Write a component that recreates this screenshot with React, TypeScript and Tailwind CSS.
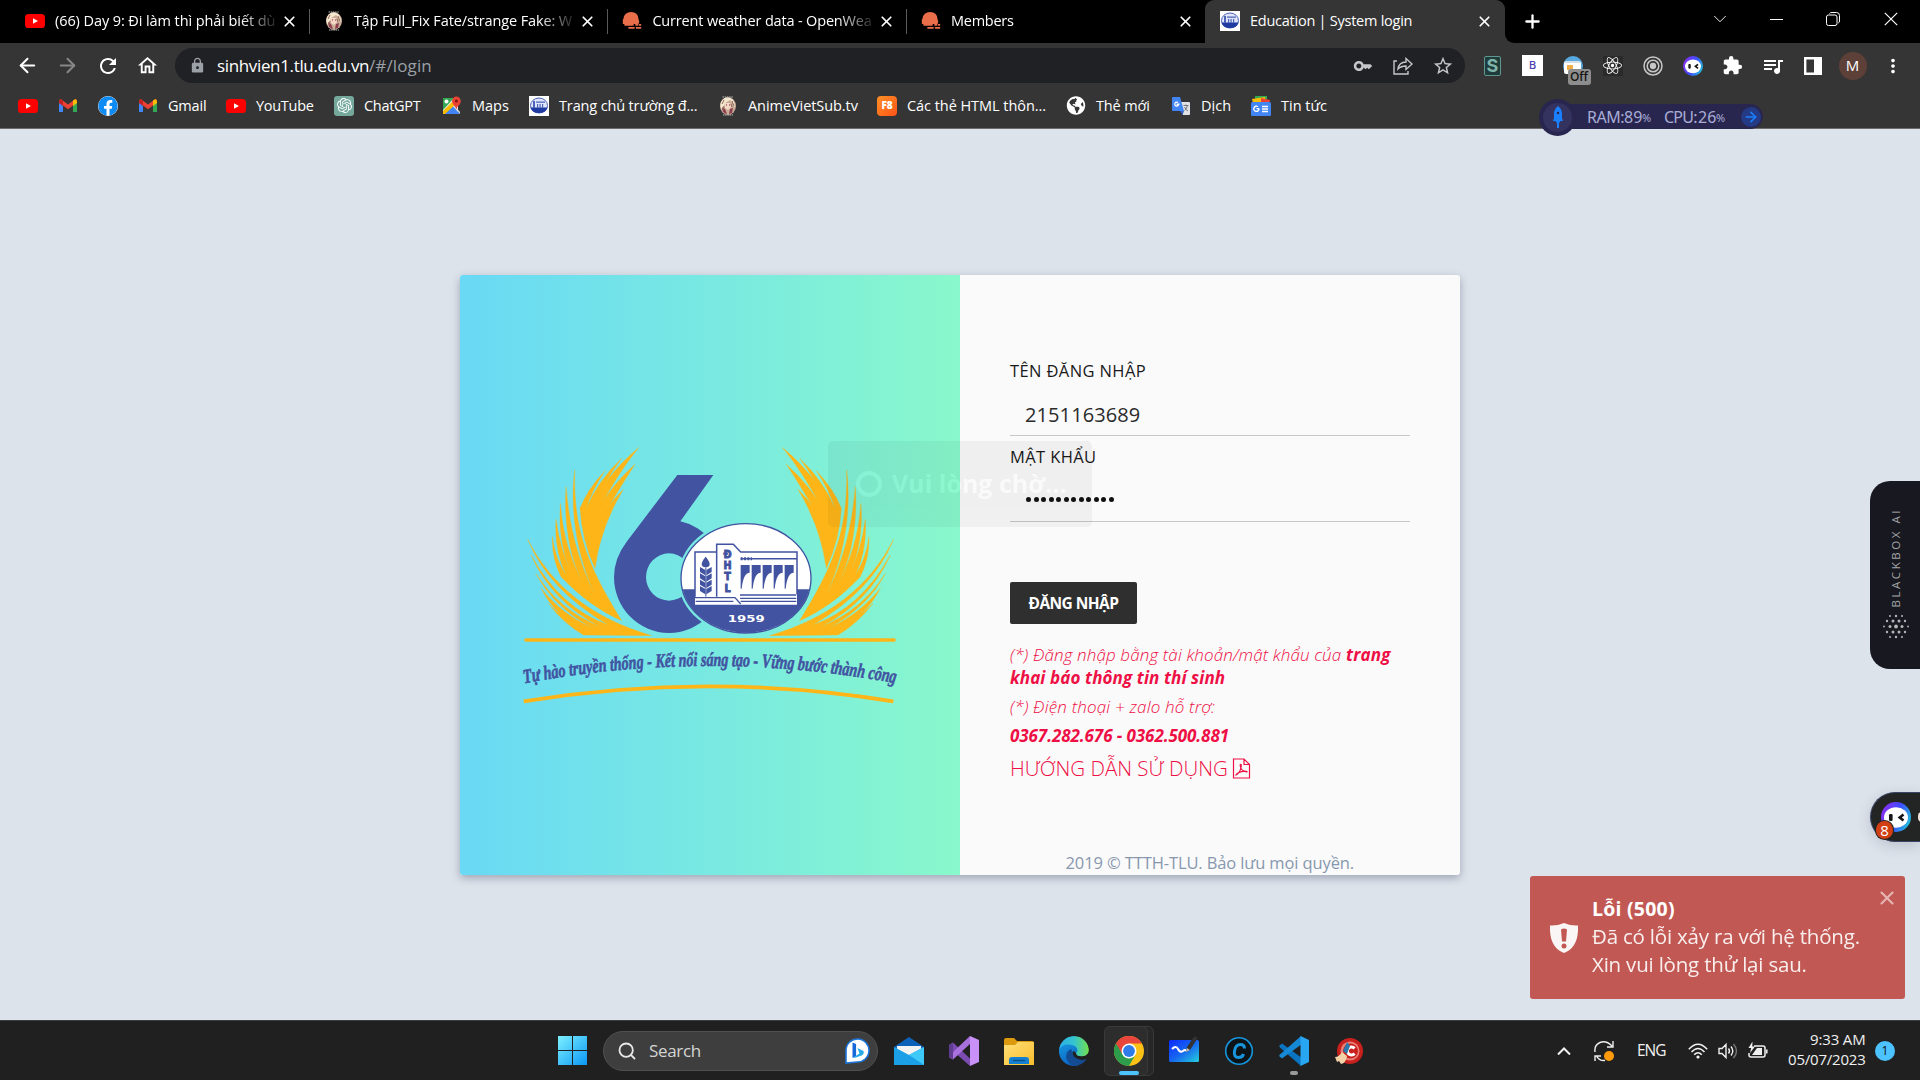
import React, { useLayoutEffect, useRef, useState } from "react";
import { ArrowLeft, ArrowRight, Search, X, Plus, ChevronDown } from "lucide-react";
import { FaFacebook, FaGlobeAmericas, FaReact } from "react-icons/fa";
import { MdKey, MdLock, MdRefresh, MdOutlineHome, MdExtension, MdStarBorder, MdMoreVert, MdQueueMusic } from "react-icons/md";
import { SiOpenai } from "react-icons/si";

/** Text set to an exact advance width by distributing letter spacing. */
function Fit({ w, className = "", children }: { w: number; className?: string; children: React.ReactNode }) {
  const ref = useRef<HTMLSpanElement>(null);
  const [spacing, setSpacing] = useState(0);
  useLayoutEffect(() => {
    const el = ref.current;
    if (!el) return;
    const count = (el.textContent || "").normalize("NFC").length;
    el.style.letterSpacing = "0px";
    setSpacing((w - el.offsetWidth) / count);
  }, [w]);
  return (
    <span className={`block shrink-0 whitespace-pre ${className}`} style={{ width: w }}>
      <span ref={ref} style={{ letterSpacing: `${spacing}px` }}>{children}</span>
    </span>
  );
}

/* ---------- small brand icons ---------- */
const YouTube = () => (
  <svg viewBox="0 0 20 20" className="h-5 w-5 shrink-0">
    <rect x="0" y="3" width="20" height="14" rx="3.6" fill="#f00" />
    <path d="M8 7.2v5.6l5-2.8z" fill="#fff" />
  </svg>
);
const Gmail = () => (
  <svg viewBox="0 0 20 20" className="h-5 w-5 shrink-0">
    <path d="M1 5v11h4V9z" fill="#4285f4" />
    <path d="M19 5v11h-4V9z" fill="#34a853" />
    <path d="M1 5.5Q1 3 3.4 3.4L10 8.4l6.6-5Q19 3 19 5.5L15 9.4l-5 3.8-5-3.8z" fill="#ea4335" />
    <path d="M15 4.6l1.6-1.2Q19 3 19 5.7V7l-4 3z" fill="#fbbc04" />
    <path d="M1 5.5V7l4 3V5L3.4 3.4Q1 3 1 5.5z" fill="#c5221f" />
  </svg>
);
const Maps = () => (
  <svg viewBox="0 0 20 20" className="h-5 w-5 shrink-0">
    <path d="M1 2h15v16H1z" fill="#e8eaed" />
    <path d="M1 2h11L1 14z" fill="#34a853" />
    <path d="M1 18L10 9l8 9z" fill="#4285f4" />
    <path d="M1 15L12 4l3 3L3 18H1z" fill="#fbbc04" />
    <path d="M11 10l2 0 5 6v2z" fill="#dadce0" />
    <path d="M14 13c0-3-4-4-4-8a4.4 4.4 0 018.800 0c0 4-4 5-4.200 8z" fill="#ea4335" />
    <circle cx="14.400" cy="5" r="1.500" fill="#811411" />
    <circle cx="4.500" cy="5.500" r="2" fill="#fff" />
  </svg>
);
const Tlu = () => (
  <svg viewBox="0 0 20 20" className="h-5 w-5 shrink-0">
    <rect width="20" height="20" fill="#fff" />
    <ellipse cx="10" cy="9.500" rx="8.500" ry="7.500" fill="#dfe6fb" stroke="#4d63b8" />
    <path d="M1.500 11.500h17Q17 17 10 17T1.500 11.500z" fill="#1f3aa0" />
    <path d="M4 5h2v7H4zM7 5.500h9v1.300H7zM8 8h1.200v4H8zM10.500 8h1.200v4h-1.200zM13 8h1.200v4H13z" fill="#4d63b8" />
  </svg>
);
const Anime = () => (
  <svg viewBox="0 0 20 20" className="h-5 w-5 shrink-0">
    <ellipse cx="10" cy="10" rx="8" ry="9" fill="#c9ac98" />
    <path d="M3 6Q6 0 12 2q5 2 5 9-2-1-2-4l-3-3-5 3-2 8Q1 11 3 6z" fill="#f4e7cf" />
    <path d="M7 7h5l1 4-3 3-3-2z" fill="#f7d8c6" />
    <path d="M4 11l3 2 2 5Q4 17 4 11zM12 13l3-1-1 5-3 1z" fill="#8c3c4c" />
    <path d="M4 8l2-4M14 5l2 5M6 10l-1 4M13 8l1 3" stroke="#8f6558" strokeWidth="1" />
    <path d="M4.500 1h11M5 19h10" stroke="#bbb" strokeWidth="1" strokeDasharray="1.500 .7" />
    <path d="M8 9h1M11 9h1" stroke="#6b2737" strokeWidth="1.200" />
  </svg>
);
const Weather = () => (
  <svg viewBox="0 0 20 20" className="h-5 w-5 shrink-0">
    <path d="M1 11Q0 9 1.500 7.500 2.500 1 9 1q7 0 7.500 7 1.500 3 0 5H2Q0 13 1 11z" fill="#eb6e4b" />
    <path d="M3 13.800h8M14 13.800h1.500M17.500 13.800h1M7 16.800h5M14.500 16.800h4" stroke="#eb6e4b" strokeWidth="1.700" strokeLinecap="round" />
  </svg>
);
const F8 = () => (
  <span className="flex h-5 w-5 shrink-0 items-center justify-center rounded-[4px] bg-gradient-to-br from-[#ff8f26] to-[#ff5117] font-['Open_Sans'] text-[10px] font-extrabold text-white">F8</span>
);
const Translate = () => (
  <svg viewBox="0 0 20 20" className="h-5 w-5 shrink-0">
    <path d="M8 6h10q1 0 1 1v11q0 1-1 1h-6z" fill="#dfe1e5" />
    <path d="M2 1h7l4 14H2q-1 0-1-1V2q0-1 1-1z" fill="#4285f4" />
    <path d="M9 15h4l-1.500 4z" fill="#3060c0" />
    <path d="M8.600 8H6.200v1.200h1.200A2 2 0 117 6.500" stroke="#fff" strokeWidth="1.200" fill="none" />
    <path d="M12.500 9.500h5M15 8.500v1M16.500 9.500q-.5 3-3 5M13.500 11q1.500 3 3.500 4" stroke="#777" strokeWidth="1" fill="none" />
  </svg>
);
const News = () => (
  <svg viewBox="0 0 20 20" className="h-5 w-5 shrink-0">
    <path d="M4 0h12v6H4z" fill="#34a853" />
    <path d="M1 3l13-2 1 6H2z" fill="#fbbc04" />
    <path d="M10 2l9 2-1 4h-8z" fill="#ea4335" />
    <rect x="0" y="6" width="20" height="14" rx="1.500" fill="#4285f4" />
    <path d="M8 12.600H5.500M8 12.600A2.600 2.600 0 117 10.700M11 10.500h6M11 13h6M11 15.500h6" stroke="#fff" strokeWidth="1.400" fill="none" />
  </svg>
);
const Face = ({ className = "h-5 w-5" }: { className?: string }) => (
  <svg viewBox="0 0 30 30" className={`${className} shrink-0`}>
    <defs>
      <linearGradient id="face" x1="0" y1=".3" x2="1" y2=".7">
        <stop offset="0" stopColor="#8a2ff0" />
        <stop offset=".5" stopColor="#3f4bff" />
        <stop offset="1" stopColor="#1fc3d8" />
      </linearGradient>
    </defs>
    <circle cx="15" cy="15" r="15" fill="url(#face)" />
    <ellipse cx="15" cy="15.500" rx="12" ry="10.300" fill="#fff" />
    <rect x="8" y="12" width="3.600" height="7" rx="1.200" fill="#161616" />
    <path d="M22.500 12.500l-3.800 3 3.800 3" stroke="#161616" strokeWidth="2.600" fill="none" />
  </svg>
);

/* ---------- browser chrome ---------- */
const ui = "font-['Open_Sans',sans-serif]";

function Tab({ icon, title, w, last = false }: { icon: React.ReactNode; title: string; w: number; last?: boolean }) {
  return (
    <div className={`flex h-[43px] shrink-0 items-center pb-[1px] pl-[14px] ${last ? "w-[298px]" : "w-[298.700px]"}`}>
      {icon}
      <div className="ml-[10px] w-[221px] [mask-image:linear-gradient(to_right,black_84%,transparent_102%)]">
        <Fit w={w} className="text-[14.500px] leading-5 text-white">{title}</Fit>
      </div>
      <X className="ml-[5px] h-[17px] w-[17px] shrink-0 text-white" strokeWidth={2.4} />
      {!last && <div className="ml-[11px] h-[25px] w-px bg-[#5a5a5a]" />}
    </div>
  );
}

function TabStrip() {
  return (
    <div className="flex h-[43px] bg-black">
      <div className="flex w-[1205px] pl-[11px]">
        <Tab icon={<YouTube />} title="(66) Day 9: Đi làm thì phải biết dù" w={220} />
        <Tab icon={<Anime />} title="Tập Full_Fix Fate/strange Fake: W" w={218} />
        <Tab icon={<Weather />} title="Current weather data - OpenWea" w={219} />
        <Tab icon={<Weather />} title="Members" w={62} last />
      </div>
      <div className="flex h-[43px] w-[300px] items-center rounded-t-[9px] bg-[#353535] pb-[1px] pl-[15px]">
        <Tlu />
        <Fit w={162} className="ml-[10px] text-[14.500px] leading-5 text-white">Education | System login</Fit>
        <X className="ml-[64px] h-[17px] w-[17px] text-white" strokeWidth={2.4} />
      </div>
      <div className="flex flex-1 items-center bg-[#353535]">
        <div className="flex h-[43px] flex-1 items-center rounded-bl-[9px] bg-black text-white">
          <Plus className="ml-[17px] h-[21px] w-[21px]" strokeWidth={2.6} />
          <div className="ml-auto flex w-[230px] items-center pb-[6px] pr-0">
            <ChevronDown className="ml-[19px] h-[22px] w-[22px]" strokeWidth={1} />
            <svg className="ml-[39px] h-[14px] w-[13px]" viewBox="0 0 13 14"><path d="M0 7.500h13" stroke="#fff" /></svg>
            <svg className="ml-[43px] h-[14px] w-[14px]" viewBox="0 0 14 14" fill="none" stroke="#fff">
              <rect x=".5" y="3" width="10.500" height="10.500" rx="2" />
              <path d="M3.500 1.500Q4 .5 6 .5h4.500q3 0 3 3V9q0 1.500-1.200 2" />
            </svg>
            <svg className="ml-[44px] h-[14px] w-[14px]" viewBox="0 0 14 14"><path d="M.8.8l12.400 12.400M13.200.8L.8 13.200" stroke="#fff" strokeWidth="1.200" /></svg>
          </div>
        </div>
      </div>
    </div>
  );
}

const Cell = ({ children }: { children: React.ReactNode }) => (
  <div className="flex h-[35px] w-10 shrink-0 items-center justify-center">{children}</div>
);

function Toolbar() {
  return (
    <div className="flex h-[45px] items-center pl-[7px] text-white">
      <Cell><ArrowLeft className="h-[23px] w-[23px]" strokeWidth={2.1} /></Cell>
      <Cell><ArrowRight className="h-[23px] w-[23px] text-[#878787]" strokeWidth={2.1} /></Cell>
      <Cell><MdRefresh className="h-[24px] w-[24px] translate-x-[1px]" /></Cell>
      <Cell><MdOutlineHome className="h-[23px] w-[23px]" /></Cell>
      <div className="ml-[8px] flex h-[35px] w-[1290px] items-center rounded-full bg-[#202124] pl-[14px] pr-[2px]">
        <MdLock className="h-[17px] w-[17px] text-[#9aa0a6]" />
        <Fit w={152} className="ml-[11px] text-[17px] leading-6 text-white">sinhvien1.tlu.edu.vn</Fit>
        <Fit w={63} className="text-[17px] leading-6 text-[#9aa0a6]">/#/login</Fit>
        <div className="ml-auto flex items-center text-[#c4c7ca]">
          <Cell><MdKey className="h-[20px] w-[20px]" /></Cell>
          <Cell>
            <svg viewBox="0 0 20 18" className="h-[18px] w-5" fill="none" stroke="currentColor" strokeWidth="1.400">
              <path d="M4 4H1v13h14v-3M5 12q1-7 8-7V1.500l6 5.500-6 5.500V9q-5 0-8 3z" />
            </svg>
          </Cell>
          <Cell><MdStarBorder className="h-[22px] w-[22px]" /></Cell>
        </div>
      </div>
      <div className="ml-[7.500px] flex items-center">
        <Cell>
          <span className="flex h-[20px] w-[17px] items-center justify-center rounded-[2px] border border-[#5f9690] bg-[#1f3c3a] font-['Inter'] text-[18px] font-bold leading-none text-[#7fb5ac]">S</span>
        </Cell>
        <Cell><span className="flex h-[21px] w-[21px] items-center justify-center bg-white font-['Inter'] text-[11px] font-medium text-[#4c40b5]">B</span></Cell>
        <Cell>
          <div className="relative h-5 w-5 rounded-full bg-[#58a8e0]">
            <div className="mx-auto h-[13px] w-[17px] translate-y-[5px] rounded-[2px] border-t-2 border-[#d5dde6] bg-white">
              <div className="ml-[3px] h-[5px] w-[6px] translate-y-[2px] bg-[#f0ae4d]" />
            </div>
            <span className="absolute left-[5px] top-[13px] flex h-[16px] w-[23px] items-center justify-center rounded-[3px] bg-[#8d8d8d] text-[12px] font-semibold leading-none text-[#161616]">Off</span>
          </div>
        </Cell>
        <Cell>
          <span className="flex h-5 w-5 items-center justify-center bg-[#2a2a2a]"><FaReact className="h-[19px] w-[19px]" /></span>
        </Cell>
        <Cell>
          <svg viewBox="0 0 20 20" className="h-5 w-5" fill="none" stroke="#c8c8c8" strokeWidth="1.500">
            <circle cx="10" cy="10" r="9" /><circle cx="10" cy="10" r="5.800" /><circle cx="10" cy="10" r="2.400" fill="#c8c8c8" />
          </svg>
        </Cell>
        <Cell><Face /></Cell>
        <Cell><MdExtension className="h-[21px] w-[21px]" /></Cell>
        <Cell><MdQueueMusic className="h-[24px] w-[24px]" /></Cell>
        <Cell>
          <svg viewBox="0 0 18 18" className="h-[18px] w-[18px]"><path d="M0 0h18v18H0zM2.400 2.400v13.200h7.600V2.400z" fill="#fff" fillRule="evenodd" /></svg>
        </Cell>
        <Cell><span className="flex h-7 w-7 items-center justify-center rounded-full bg-[#5d4037] text-[15px]">M</span></Cell>
        <Cell><MdMoreVert className="h-[22px] w-[22px]" /></Cell>
      </div>
    </div>
  );
}

const bookmarks: { icon: React.ReactNode; text?: string; w: number; gap: string }[] = [
  { icon: <YouTube />, w: 0, gap: "w-[40px]" },
  { icon: <Gmail />, w: 0, gap: "w-[40px]" },
  { icon: <FaFacebook className="h-5 w-5 shrink-0 rounded-full bg-white text-[#0f8cf3]" />, w: 0, gap: "w-[40px]" },
  { icon: <Gmail />, text: "Gmail", w: 38, gap: "w-[88px]" },
  { icon: <YouTube />, text: "YouTube", w: 58, gap: "w-[108px]" },
  { icon: <span className="flex h-5 w-5 shrink-0 items-center justify-center rounded-[3px] bg-[#75a99c]"><SiOpenai className="h-[15px] w-[15px] text-white" /></span>, text: "ChatGPT", w: 57, gap: "w-[108px]" },
  { icon: <Maps />, text: "Maps", w: 37, gap: "w-[87px]" },
  { icon: <Tlu />, text: "Trang chủ trường đ...", w: 138, gap: "w-[189px]" },
  { icon: <Anime />, text: "AnimeVietSub.tv", w: 110, gap: "w-[159px]" },
  { icon: <F8 />, text: "Các thẻ HTML thôn...", w: 139, gap: "w-[189px]" },
  { icon: <FaGlobeAmericas className="h-[19px] w-5 shrink-0 text-white" />, text: "Thẻ mới", w: 54, gap: "w-[105px]" },
  { icon: <Translate />, text: "Dịch", w: 30, gap: "w-[80px]" },
  { icon: <News />, text: "Tin tức", w: 46, gap: "w-[80px]" },
];

function Bookmarks() {
  return (
    <div className="flex h-[41px] items-center border-b border-[#6a6a6a] pb-[5px] pl-[18px]">
      {bookmarks.map((b, i) => (
        <div key={i} className={`flex shrink-0 items-center gap-[10px] ${b.gap}`}>
          {b.icon}
          {b.text && <Fit w={b.w} className="text-[14.500px] leading-5 text-white">{b.text}</Fit>}
        </div>
      ))}
    </div>
  );
}

function RamWidget() {
  return (
    <div className="absolute left-[1539px] top-[98px] flex h-[38px] w-[224px] items-center">
      <div className="absolute bottom-[7px] left-[18px] right-0 top-[6px] rounded-r-full bg-[#28264f]" />
      <div className="relative flex h-[37px] w-[37px] items-center justify-center rounded-full bg-[#28264f]">
        <div className="flex h-[29px] w-[29px] items-center justify-center rounded-full bg-[#34325f]">
          <svg viewBox="0 0 12 22" className="h-[22px] w-3" fill="#1a80ff">
            <path d="M6 0q4 3 4 8v4l1 3H8.500L7 17v5H5v-5l-1.500-2H1l1-3V8q0-5 4-8z" /><circle cx="6" cy="7" r="1.300" fill="#28264f" />
          </svg>
        </div>
      </div>
      <div className="relative ml-[11px] flex items-center text-[#a9add6]">
        <Fit w={37} className="text-[16px]">RAM:</Fit><Fit w={18} className="text-[16px]">89</Fit><Fit w={11} className="pt-[2px] text-[11px]">%</Fit>
        <Fit w={33} className="ml-[11px] text-[16px]">CPU:</Fit><Fit w={18} className="ml-[1px] text-[16px]">26</Fit><Fit w={11} className="pt-[2px] text-[11px]">%</Fit>
      </div>
      <div className="relative ml-auto mr-[2px] flex h-5 w-5 items-center justify-center rounded-full bg-[#243a85]">
        <ArrowRight className="h-[16px] w-[16px] text-[#1a80ff]" strokeWidth={2.400} />
      </div>
    </div>
  );
}

/* ---------- login card ---------- */
function Wheat() {
  return (
    <g fill="#fdb517" stroke="#fdb517" strokeWidth="1">
      <path d="M240 235Q262 178 315 122Q276 180 258 237Q294 152 365 85Q316 150 263 262Q300 150 417 52Q352 130 272 282Q318 180 405 103Q348 190 284 303Q312 235 370 178Q302 290 285 415Q245 330 240 235z" />
      <path d="M224 120C220 300 262 405 365 572Q268 530 183 440Q155 385 157 320Q165 385 198 435Q162 360 168 268Q180 365 223 447Q172 350 181 220Q190 350 250 462Q188 340 198 170Q212 350 283 490C236 385 208 260 224 120z" />
      <path d="M83 328Q190 540 455 617L250 615Q190 580 145 520Q195 572 248 595Q168 562 123 475Q185 553 275 593Q160 530 107 430Q180 543 300 590Q155 515 93 375Q182 535 325 585Q145 480 83 328z" />
    </g>
  );
}

function Logo() {
  return (
    <svg viewBox="0 0 1260 870" className="h-[290px] w-[420px]">
      <defs>
        <mask id="six"><rect width="1260" height="870" fill="#fff" /><ellipse cx="738" cy="445" rx="204" ry="173" fill="#000" /></mask>
        <clipPath id="seal"><ellipse cx="738" cy="445" rx="194" ry="163" /></clipPath>
        <path id="motto" d="M73 760Q630 655 1200 762" />
      </defs>
      <Wheat />
      <g transform="translate(1264 0) scale(-1 1)"><Wheat /></g>
      <path mask="url(#six)" fillRule="evenodd" fill="#4153a1" d="M532 135H640L541 274A165 168 0 01672 441A165 168 0 01342 441Q342 385 380 335zM507 370A69 71 0 00507 512A69 71 0 00507 370z" />
      <ellipse cx="738" cy="445" rx="195" ry="164" fill="#fff" stroke="#4153a1" strokeWidth="4" />
      <g clipPath="url(#seal)">
        <path d="M530 478H950V620H530z" fill="#4153a1" />
      </g>
      <path d="M585 365H650V343H700L722 366H891V524H585z" fill="#fff" />
      <path d="M585 500V366H650V343H700L722 366H891V492M650 343V500M722 386H889" fill="none" stroke="#4153a1" strokeWidth="4.500" />
      <path d="M722 386h34" stroke="#4153a1" strokeWidth="9" strokeDasharray="6 4" />
      <path d="M585 503H705L722 522M720 495H889M720 505H889M587 514H700M722 514H889" stroke="#4153a1" strokeWidth="4" fill="none" />
      {[722, 755, 788, 821, 854].map((x) => (
        <path key={x} transform={`translate(${x} 0)`} d="M0 405H27V428Q8 428 3 476L0 476z" fill="#4153a1" />
      ))}
      <path d="M617 380Q629 394 629 402A12 10 0 01605 402Q605 394 617 380z" fill="#4153a1" />
      {[411, 430, 449, 468].map((y) => (
        <path key={y} transform={`translate(0 ${y})`} d="M600 0L616 9V25L600 15zM635 0L619 9V25L635 15z" fill="#4153a1" />
      ))}
      <path d="M617.500 412V500" stroke="#4153a1" strokeWidth="3" />
      <g fill="#4153a1" stroke="#4153a1" strokeWidth="2.500" fontFamily="DejaVu Sans" fontWeight="bold" fontSize="29" textAnchor="middle">
        <text x="683" y="384">Đ</text><text x="683" y="418">H</text><text x="683" y="451">T</text><text x="683" y="486">L</text>
      </g>
      <text x="683" y="576" fill="#fff" fontFamily="DejaVu Sans" fontWeight="bold" fontSize="28" textLength="111" lengthAdjust="spacingAndGlyphs">1959</text>
      <path d="M78 630H1182" stroke="#fdb517" strokeWidth="11" strokeLinecap="round" />
      <path d="M71 814Q630 724 1180 814" stroke="#fdb517" strokeWidth="11" fill="none" />
      <text fill="#4153a1" fontFamily="Liberation Serif" fontStyle="italic" fontWeight="bold" fontSize="59" stroke="#4153a1" strokeWidth="1.800">
        <textPath href="#motto" textLength="1120" lengthAdjust="spacingAndGlyphs">Tự hào truyền thống - Kết nối sáng tạo - Vững bước thành công</textPath>
      </text>
    </svg>
  );
}

const PdfIcon = () => (
  <svg viewBox="0 0 19 21" className="ml-[4px] h-[21px] w-[19px]" fill="none" stroke="#ee0f45" strokeWidth="1.200">
    <path d="M1.500 1H12l5.500 5.500V20h-16zM12 1v5.500h5.500M4 17q4-2 5-7.500.5-2.500 0-3-1-.5-.7 1.500.7 5 6.200 6 .8 0 .5-.5-4-1-9 1.500-2 1-2 2z" />
  </svg>
);

function LoginCard() {
  return (
    <div className="relative flex h-[600px] w-[1000px] rounded-[3px] bg-[#fafafa] shadow-[0_3px_8px_rgba(40,50,80,0.35)]">
      <div className="w-[500px] rounded-l-[3px] bg-gradient-to-r from-[#69d9f5] to-[#89f8cb] pl-[40px] pt-[155px]">
        <Logo />
      </div>
      <div className="flex w-[500px] flex-col px-[50px] pt-[84px] font-['Open_Sans',sans-serif]">
        <Fit w={136} className="h-6 text-[16.500px] leading-6 text-[#1a1a1a]">TÊN ĐĂNG NHẬP</Fit>
        <div className="flex h-[53px] items-center border-b border-[#c8c8c8] pl-[15px] pt-[11px]">
          <Fit w={115} className="text-[20px] text-[#2a2a2a]">2151163689</Fit>
        </div>
        <Fit w={86} className="mt-[9px] h-6 text-[16.500px] leading-6 text-[#1a1a1a]">MẬT KHẨU</Fit>
        <div className="flex h-[53px] items-center gap-[2.500px] border-b border-[#c8c8c8] pl-[16px] pt-[9px]">
          {Array.from({ length: 12 }, (_, i) => (
            <span key={i} className="h-[5px] w-[5px] rounded-full bg-[#111]" />
          ))}
        </div>
        <div className="mt-[60px] flex h-[42px] w-[127px] items-center justify-center rounded-[2px] bg-[#2f2f2f] pt-[1px]">
          <Fit w={90} className="text-[15.500px] font-bold text-white">ĐĂNG NHẬP</Fit>
        </div>
        <div className="mt-[19px] text-[17px] italic leading-[23px] text-[#ee0f45]">
          <div className="flex">
            <Fit w={336} className="font-light">{"(*) Đăng nhập bằng tài khoản/mật khẩu của "}</Fit>
            <Fit w={45} className="font-bold">trang</Fit>
          </div>
          <Fit w={215} className="font-bold">khai báo thông tin thí sinh</Fit>
          <Fit w={205} className="mt-[6px] font-light">(*) Điện thoại + zalo hỗ trợ:</Fit>
          <Fit w={219} className="mt-[6px] font-bold">0367.282.676 - 0362.500.881</Fit>
        </div>
        <div className="mt-[7px] flex h-[28px] items-center text-[20.500px] text-[#ee0f45]">
          <Fit w={218} className="font-light">HƯỚNG DẪN SỬ DỤNG</Fit>
          <PdfIcon />
        </div>
        <div className="mt-[69px] flex justify-center">
          <Fit w={289} className="text-[16.500px] leading-6 text-[#8797ae]">2019 © TTTH-TLU. Bảo lưu mọi quyền.</Fit>
        </div>
      </div>
      <div className="absolute left-[368px] top-[166px] flex h-[86px] w-[264px] items-center rounded-[5px] bg-black pl-[28px] font-['Open_Sans'] opacity-[0.038]">
        <span className="h-[26px] w-[26px] rounded-full border-4 border-white" />
        <Fit w={175} className="ml-[10px] text-[25px] font-bold text-white">Vui lòng chờ...</Fit>
      </div>
    </div>
  );
}

function Toast() {
  return (
    <div className="absolute left-[1530px] top-[876px] flex h-[123px] w-[375px] rounded-[3px] bg-[#c25853] pl-[20px] pt-[19px] font-['Open_Sans']">
      <svg viewBox="0 0 28 30" className="mt-[28px] h-[30px] w-7">
        <path d="M14 0Q21 3 28 2.500Q29 24 14 30Q-1 24 0 2.500Q7 3 14 0z" fill="#fbf6f6" />
        <path d="M11 6.500Q14 4.500 17 6.500L16 18.500H12z" fill="#c25853" /><circle cx="14" cy="23" r="2.500" fill="#c25853" />
      </svg>
      <div className="ml-[14px] text-[20.500px] leading-[28px] text-white">
        <Fit w={83} className="h-[27px] text-[19.500px] font-bold">Lỗi (500)</Fit>
        <Fit w={268} className="opacity-90">Đã có lỗi xảy ra với hệ thống.</Fit>
        <Fit w={215} className="opacity-90">Xin vui lòng thử lại sau.</Fit>
      </div>
      <X className="absolute right-[7px] top-[11px] h-[22px] w-[22px] text-[#e5b6b4]" strokeWidth={2.300} />
    </div>
  );
}

const dots: [number, number, number][] = [
  [7, 2, 1], [13, 2, 1.200], [19, 2, 1],
  [4, 7, 1.200], [10, 7, 1.500], [16, 7, 1.500], [22, 7, 1.200],
  [1, 12.500, 0.900], [7, 12.500, 1.500], [13, 12.500, 1.900], [19, 12.500, 1.500], [25, 12.500, 0.900],
  [4, 18, 1.200], [10, 18, 1.500], [16, 18, 1.500], [22, 18, 1.200],
  [7, 23, 1], [13, 23, 1.200], [19, 23, 1],
];

function SideWidgets() {
  return (
    <>
      <div className="absolute left-[1870px] top-[481px] flex h-[188px] w-[50px] flex-col items-center rounded-l-[20px] bg-[#181920] pt-[27px]">
        <div className="flex h-[99px] w-5 items-center justify-center">
          <div className="-rotate-90 font-['Open_Sans'] text-[#a4a5a8]">
            <Fit w={99} className="text-[11.500px] font-medium leading-5">BLACKBOX AI</Fit>
          </div>
        </div>
        <svg viewBox="0 0 26 25" className="mt-[7px] h-[25px] w-[26px] translate-x-[1px]" fill="#b5b5b8">
          {dots.map(([x, y, r]) => <circle key={`${x}-${y}`} cx={x} cy={y} r={r} />)}
        </svg>
      </div>
      <div className="absolute left-[1870px] top-[792px] flex h-[50px] w-[50px] items-center overflow-hidden rounded-l-[25px] border border-r-0 border-[#3b4566] bg-[#232525] pl-[10px] shadow-[0_4px_14px_rgba(60,60,90,0.2)]">
        <Face className="h-[30px] w-[30px]" />
        <span className="ml-[7px] h-[10px] w-[8px] shrink-0 rounded-full bg-[#f3e3dc]" />
      </div>
      <div className="absolute left-[1876px] top-[821px] flex h-[18px] w-[17px] items-center justify-center rounded-full bg-[#d13f13] font-['Open_Sans'] text-[15px] text-white ring-1 ring-[#232525]">8</div>
    </>
  );
}

/* ---------- taskbar ---------- */
const VStudio = () => (
  <svg viewBox="0 0 30 30" className="h-[30px] w-[30px]">
    <path d="M0 9l4-2.500 18 17L21 30 4 15v8.500L0 21z" fill="#7b4bb0" />
    <path d="M0 21l4-5 17-16 1 7L4 23.500z" fill="#a871dd" /><path d="M0 9l4-2.500V23.500L0 21z" fill="#5f3e91" />
    <path d="M21 0l9 4v22l-9 4z" fill="#c990f7" />
  </svg>
);
const VsCode = () => (
  <svg viewBox="0 0 30 30" className="h-[30px] w-[30px]">
    <path d="M0 10l3-2.500L23 22l-1 8L1 11.500z" fill="#0a74c0" />
    <path d="M0 20l3 2.500L23 8l-1-8L1 18.500z" fill="#1589d6" /><path d="M21.500 0L30 4v22l-8.500 4z" fill="#28a6f2" />
  </svg>
);
const Folder = () => (
  <svg viewBox="0 0 30 30" className="h-[30px] w-[30px]">
    <defs><linearGradient id="fold" x2="1" y2="1"><stop stopColor="#ffe07a" /><stop offset="1" stopColor="#fbbd2b" /></linearGradient></defs>
    <path d="M0 4q0-2 2-2h8l3 3h15q2 0 2 2v8H0z" fill="#dd9a0e" /><path d="M0 9h11l3-3h16v23H0z" fill="url(#fold)" />
    <path d="M5 28v-4q0-3 3-3h14q3 0 3 3v4z" fill="#1480d0" /><path d="M9 24.500h12" stroke="#0a4f8f" strokeWidth="1.400" />
  </svg>
);
const Edge = () => (
  <svg viewBox="0 0 30 30" className="h-[30px] w-[30px]">
    <defs>
      <linearGradient id="e1" x2="1"><stop stopColor="#2bb0e8" /><stop offset=".5" stopColor="#35c4cf" /><stop offset="1" stopColor="#72e04b" /></linearGradient>
      <linearGradient id="e2" y2="1" x2=".5"><stop stopColor="#1698e0" /><stop offset="1" stopColor="#0b63c4" /></linearGradient>
      <clipPath id="disc"><circle cx="15" cy="15" r="15" /></clipPath>
    </defs>
    <g clipPath="url(#disc)">
      <path d="M0 8H20V30H0z" fill="url(#e2)" />
      <path d="M0 14Q2 0 15 0t15 13q0 7-7 7.500-6.500 0-6-3.500 1.500-1 1.500-3-1-5-8.500-5.500T0 14z" fill="url(#e1)" />
      <path d="M12 13q-6 3-4.500 10 2 5 8.500 7.500h4Q27 28 29 22.500q-4 2-8 1-6-1-7.500-6 0-3-1.500-4.500z" fill="#134c93" />
      <path d="M13.500 16q0 6.500 8 7.500 4 .5 8.500-2v-3q-4 2.500-8 2-5-.5-5-3.500l-2-2z" fill="#202020" />
    </g>
  </svg>
);
const Chrome = () => (
  <svg viewBox="-15 -15 30 30" className="h-[30px] w-[30px]">
    <circle r="15" fill="#fbc116" />
    <path d="M-13 -7.500A15 15 0 000 15L6.500 3.500 0 0z" fill="#2d9c4b" /><path d="M0 -7.500H13A15 15 0 00-13 -7.500L-6.500 3.500z" fill="#e8453c" />
    <circle r="7.500" fill="#fff" /><circle r="5.900" fill="#2f7be8" />
  </svg>
);

const AppSlot = ({ children }: { children: React.ReactNode }) => (
  <div className="flex h-[50px] w-[55px] shrink-0 items-center justify-center">{children}</div>
);

function Taskbar() {
  return (
    <div className={`flex h-[60px] items-center border-t border-[#3b3e3f] bg-[#202020] text-[#f0f0f0] ${ui}`}>
      <svg viewBox="0 0 29 29" className="ml-[558px] h-[29px] w-[29px] shrink-0">
        <defs><linearGradient id="win" x2="1" y2="1"><stop stopColor="#7df0ff" /><stop offset="1" stopColor="#0a97f5" /></linearGradient></defs>
        <path d="M0 0h14v14H0zM15 0h14v14H15zM0 15h14v14H0zM15 15h14v14H15z" fill="url(#win)" />
      </svg>
      <div className="ml-[16px] flex h-10 w-[275px] shrink-0 items-center rounded-full border border-[#505050] bg-[#3e3e3e] pl-[13px] pr-[7px]">
        <Search className="h-[20px] w-[20px] text-[#e8e8e8]" strokeWidth={2.200} />
        <Fit w={52} className="ml-[12px] text-[17px] text-[#d4d4d4]">Search</Fit>
        <svg viewBox="0 0 26 26" className="ml-auto h-[26px] w-[26px]">
          <path d="M2 25V12a11.500 11.500 0 1111 12z" fill="#fff" stroke="#1c74d8" strokeWidth="1.600" />
          <path d="M8.500 4.500l3.600 1.500v12l-3.600 2z" fill="#1668d8" /><path d="M12 19.500l-3.500.5 7-4.500-2-5.500 6 3q1 3-2 4.500z" fill="#27a9e8" />
        </svg>
      </div>
      <div className="ml-[3px] flex shrink-0">
        <AppSlot>
          <svg viewBox="0 0 30 28" className="h-7 w-[30px]">
            <path d="M0 10L15 0l15 10v6H0z" fill="#0c62b8" /><path d="M3 9h24v10H3z" fill="#f3f3f3" />
            <path d="M0 10l15 8L30 10v18H0z" fill="#1b9fe6" /><path d="M30 10v18L15 18z" fill="#3fc9f8" />
          </svg>
        </AppSlot>
        <AppSlot><VStudio /></AppSlot>
        <AppSlot><Folder /></AppSlot>
        <AppSlot><Edge /></AppSlot>
        <div className="relative flex h-[50px] w-[55px] items-center justify-center">
          <div className="absolute left-[9px] top-0 h-[50px] w-[44px] rounded-[6px] border border-[#3a3a3a] bg-[#272727]" />
          <div className="absolute left-[3px] top-0 h-[50px] w-[44px] rounded-[6px] border border-[#3a3a3a] bg-[#2d2d2d]" />
          <div className="relative"><Chrome /></div>
          <div className="absolute bottom-[1px] left-[18px] h-1 w-5 rounded-full bg-[#4cc2ff]" />
        </div>
        <AppSlot>
          <svg viewBox="0 0 30 30" className="h-[30px] w-[30px]">
            <defs><linearGradient id="wb" x2="1" y2="1"><stop stopColor="#0b2cff" /><stop offset=".5" stopColor="#1765f0" /><stop offset="1" stopColor="#23d0dc" /></linearGradient></defs>
            <rect y="4" width="30" height="22" rx="1.500" fill="url(#wb)" />
            <path d="M3 13q4-4 6 0t5 2q2-2 4 0" stroke="#fff" strokeWidth="2" fill="none" />
            <path d="M24 2l3-2 1 3-7 11-4 2 1-5z" fill="#333" /><path d="M17 16l1-4 3 2z" fill="#bbb" />
          </svg>
        </AppSlot>
        <AppSlot>
          <svg viewBox="0 0 30 30" className="h-[30px] w-[30px]">
            <circle cx="15" cy="15" r="13.300" fill="#0d1418" stroke="#1795dc" strokeWidth="1.600" />
            <path d="M20.500 12.500q0-4-4-4-5 0-6 6.500t4 6.500q4 0 5-3.500" stroke="#1795dc" strokeWidth="3" fill="none" />
          </svg>
        </AppSlot>
        <div className="relative flex h-[50px] w-[55px] items-center justify-center">
          <VsCode /><div className="absolute bottom-[1px] left-[24px] h-1 w-2 rounded-full bg-[#9a9a9a]" />
        </div>
        <AppSlot>
          <svg viewBox="0 0 30 30" className="h-[30px] w-[30px]">
            <circle cx="16" cy="15" r="13" fill="#c8201c" /><circle cx="16" cy="15" r="9.500" fill="#e98078" /><circle cx="16.500" cy="15" r="7.500" fill="#c8201c" />
            <path d="M20.500 12.500a4 4 0 100 5" stroke="#fff" strokeWidth="3" fill="none" />
            <path d="M1 21q4 0 7-5l5 4q-1 7-6 8l-2-3-2 1z" fill="#f2d2a6" /><path d="M13 6l-4 9 4 3 3-8z" fill="#2d78a8" />
          </svg>
        </AppSlot>
      </div>
      <div className="ml-auto flex shrink-0 items-center">
        <svg viewBox="0 0 14 8" className="h-2 w-[14px]" fill="none" stroke="#f0f0f0" strokeWidth="2"><path d="M1 7.500l6-6 6 6" /></svg>
        <svg viewBox="0 0 22 22" className="ml-[22px] h-[22px] w-[22px]" fill="none" stroke="#f0f0f0" strokeWidth="1.400">
          <path d="M2 12Q1 5 7 2.500T19 6M20 1v6h-6M12 20.500Q6 21 3.500 16M2 21v-5h6" /><circle cx="16" cy="16" r="5" fill="#ff9a0a" stroke="none" />
        </svg>
        <Fit w={29} className="ml-[22px] text-[15.500px]">ENG</Fit>
        <svg viewBox="0 0 20 16" className="ml-[22px] h-4 w-5" fill="none" stroke="#f0f0f0" strokeWidth="1.500">
          <path d="M.8 6.200Q10-3.800 19.200 6.200M3.500 9Q10 1.800 16.500 9M6.200 11.800Q10 7.500 13.800 11.800" /><circle cx="10" cy="14" r="1.600" fill="#f0f0f0" stroke="none" />
        </svg>
        <svg viewBox="0 0 20 18" className="ml-[10px] h-[18px] w-5" fill="none" stroke="#f0f0f0" strokeWidth="1.400">
          <path d="M1 6.500h3l4-4v13l-4-4H1zM10.500 6.500q2 2.500 0 5M13 4.500q3.600 4.500 0 9" /><path d="M15.500 2q6 7 0 14" stroke="#777" />
        </svg>
        <svg viewBox="0 0 20 18" className="ml-[10px] h-[18px] w-5" fill="none" stroke="#f0f0f0" strokeWidth="1.500">
          <path d="M6 4h9q2 0 2 2v7q0 2-2 2H3q-2 0-2-2v-2M18.800 7.500v4" /><path d="M4 13L9 6h5v7z" fill="#f0f0f0" stroke="none" /><path d="M4.500-.5L.5 6h2.700L2 11l5-6.500H4.300z" fill="#f0f0f0" stroke="none" />
        </svg>
        <div className="ml-[20px] flex flex-col items-end pb-[4px] text-[15px] leading-5">
          <Fit w={56}>9:33 AM</Fit>
          <Fit w={78}>05/07/2023</Fit>
        </div>
        <span className="ml-[9px] mr-[25px] flex h-5 w-5 items-center justify-center rounded-full bg-[#4cc2ff] text-[12px] text-[#111]">1</span>
      </div>
    </div>
  );
}

export default function App() {
  return (
    <div className="relative flex h-[1080px] w-[1920px] flex-col overflow-hidden bg-[#dde3eb]">
      <header className={`h-[129px] shrink-0 bg-[#353535] ${ui}`}>
        <TabStrip />
        <Toolbar />
        <Bookmarks />
      </header>
      <main className="flex flex-1 justify-center pt-[146px]">
        <LoginCard />
      </main>
      <Taskbar />
      <RamWidget />
      <SideWidgets />
      <Toast />
    </div>
  );
}
